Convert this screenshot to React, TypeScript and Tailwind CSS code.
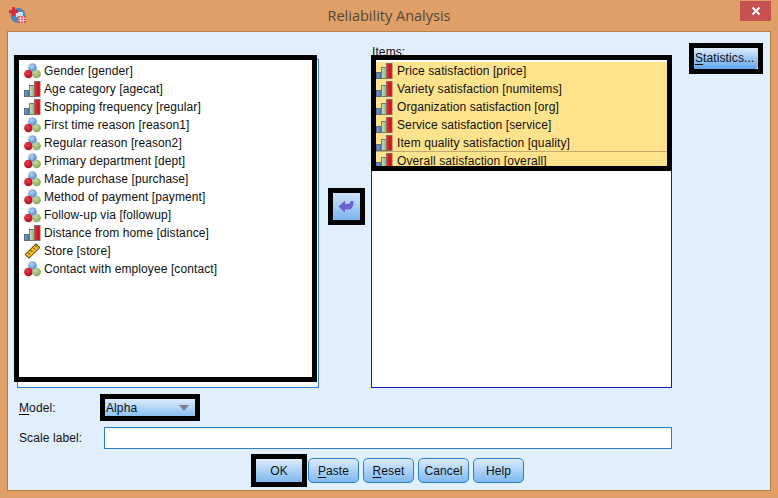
type Kind = "nominal" | "ordinal" | "scale";

const leftVars: { label: string; kind: Kind }[] = [
  { label: "Gender [gender]", kind: "nominal" },
  { label: "Age category [agecat]", kind: "ordinal" },
  { label: "Shopping frequency [regular]", kind: "ordinal" },
  { label: "First time reason [reason1]", kind: "nominal" },
  { label: "Regular reason [reason2]", kind: "nominal" },
  { label: "Primary department [dept]", kind: "nominal" },
  { label: "Made purchase [purchase]", kind: "nominal" },
  { label: "Method of payment [payment]", kind: "nominal" },
  { label: "Follow-up via [followup]", kind: "nominal" },
  { label: "Distance from home [distance]", kind: "ordinal" },
  { label: "Store [store]", kind: "scale" },
  { label: "Contact with employee [contact]", kind: "nominal" },
];

const items = [
  "Price satisfaction [price]",
  "Variety satisfaction [numitems]",
  "Organization satisfaction [org]",
  "Service satisfaction [service]",
  "Item quality satisfaction [quality]",
  "Overall satisfaction [overall]",
];

const IconDefs = () => (
  <svg width="0" height="0" className="absolute">
    <defs>
      <radialGradient id="ballBlue" cx="0.4" cy="0.35" r="0.7">
        <stop offset="0" stopColor="#b4d4f4" />
        <stop offset="1" stopColor="#4f82c4" />
      </radialGradient>
      <radialGradient id="ballRed" cx="0.4" cy="0.35" r="0.7">
        <stop offset="0" stopColor="#ee3a4a" />
        <stop offset="1" stopColor="#a80f22" />
      </radialGradient>
      <radialGradient id="ballGreen" cx="0.4" cy="0.35" r="0.7">
        <stop offset="0" stopColor="#c4dca0" />
        <stop offset="1" stopColor="#7da552" />
      </radialGradient>
      <linearGradient id="barRed" x1="0" x2="1" y1="0" y2="0">
        <stop offset="0" stopColor="#f03030" />
        <stop offset="1" stopColor="#c00810" />
      </linearGradient>
      <linearGradient id="barGreen" x1="0" x2="1" y1="0" y2="0">
        <stop offset="0" stopColor="#cfe0b8" />
        <stop offset="1" stopColor="#8cb070" />
      </linearGradient>
      <linearGradient id="barBlue" x1="0" x2="1" y1="0" y2="0">
        <stop offset="0" stopColor="#7aa4d8" />
        <stop offset="1" stopColor="#3a6cb0" />
      </linearGradient>
    </defs>
  </svg>
);

const VarIcon = ({ kind }: { kind: Kind }) => {
  if (kind === "nominal")
    return (
      <svg width="17" height="16" viewBox="0 0 17 16" className="shrink-0">
        <circle cx="8.5" cy="4.5" r="4.3" fill="url(#ballBlue)" />
        <circle cx="4.4" cy="11" r="4.3" fill="url(#ballRed)" />
        <circle cx="12.6" cy="11" r="4.3" fill="url(#ballGreen)" />
      </svg>
    );
  if (kind === "ordinal")
    return (
      <svg width="17" height="16" viewBox="0 0 17 16" className="shrink-0">
        <rect x="0.5" y="9.5" width="5" height="6" fill="url(#barBlue)" stroke="#5f6b78" />
        <rect x="5.5" y="4.5" width="5" height="11" fill="url(#barGreen)" stroke="#6f7f6a" />
        <rect x="10.5" y="0.5" width="5.5" height="15" fill="url(#barRed)" stroke="#8a6a6a" />
      </svg>
    );
  return (
    <svg width="17" height="16" viewBox="0 0 17 16" className="shrink-0">
      <path d="M1 11.5 12 0.8 16 4.5 5 15.2Z" fill="#f4b41c" stroke="#3a3216" strokeWidth="1" />
      <path d="M4 9.5 5.8 11.3M6.5 7 8.3 8.8M9 4.6 10.8 6.4M11.5 2.4 13.3 4.2" stroke="#3a3216" strokeWidth="1" />
    </svg>
  );
};

const Underlined = ({ first, rest }: { first: string; rest: string }) => (
  <>
    <span className="underline underline-offset-2">{first}</span>
    {rest}
  </>
);

const DialogButton = ({ children }: { children: React.ReactNode }) => (
  <button className="flex h-[25px] w-[51px] items-center justify-center rounded-[5px] border border-[#2a7fd0] bg-gradient-to-b from-[#dcebfb] to-[#7db8f0] text-[12px] tracking-[0.1px] text-[#101010]">
    {children}
  </button>
);

const Frame = ({ className }: { className: string }) => (
  <div className={`pointer-events-none absolute border-[5px] border-black ${className}`} />
);

export default function App() {
  return (
    <div className="flex h-[498px] w-[778px] flex-col overflow-hidden bg-[#df9f66] font-['Liberation_Sans',sans-serif] text-[12px] tracking-[0.1px] text-[#101010]">
      <IconDefs />
      <div className="relative flex h-[31px] shrink-0 items-center justify-center">
        <svg width="18" height="18" viewBox="0 0 18 18" className="absolute left-[9px] top-[6px]">
          <circle cx="9" cy="9.5" r="7.5" fill="#4a86bc" />
          <rect x="7" y="6" width="7" height="5" fill="#cfe0f0" />
          <path d="M3 1h3v3h3v3H6v3H3V7H0V4h3Z" fill="#d8283c" />
          <rect x="9" y="10" width="8" height="7" fill="#e04a5a" />
          <path d="M9 12.3h8M9 14.6h8M11.6 10v7M14.3 10v7" stroke="#fff" strokeWidth="0.7" />
        </svg>
        <span className="font-['Open_Sans',sans-serif] text-[14.5px] tracking-normal text-[#54483c]">Reliability Analysis</span>
        <div className="absolute right-[7px] top-[1px] flex h-[20px] w-[31px] items-center justify-center bg-[#c75050]">
          <svg width="10" height="10" viewBox="0 0 10 10">
            <path d="M1.5 1.5 8.5 8.5M8.5 1.5 1.5 8.5" stroke="#fff" strokeWidth="2" />
          </svg>
        </div>
      </div>

      <div className="mx-[7px] mb-[7px] flex flex-1 flex-col border border-[#b5803f] bg-[#e1eefb] px-[9px]">
        <div className="flex pt-[27px]">
          <div className="relative h-[329px] w-[302px] shrink-0 border border-[#2a7fd0] bg-white pl-[6px] pt-[2px]">
            {leftVars.map((v) => (
              <div key={v.label} className="flex h-[18px] items-center gap-[3px] whitespace-nowrap">
                <VarIcon kind={v.kind} />
                <span>{v.label}</span>
              </div>
            ))}
            <Frame className="-left-[4px] -top-[5px] h-[327px] w-[303px]" />
          </div>

          <div className="flex w-[52px] shrink-0 items-center justify-center pb-[1px]">
            <div className="relative ml-[2px] mt-[-34px] flex h-[27px] w-[27px] items-center justify-center bg-gradient-to-b from-[#cfe3f8] to-[#79b4ee]">
              <svg width="16" height="14" viewBox="0 0 16 14">
                <path d="M0.5 7.5 7 1.5V5h3c1.5 0 2.2-1 2.8-3H15.5c0 5-1.5 8.5-5 8.5H7v3.2Z" fill="#6a63cf" />
              </svg>
              <Frame className="-inset-[5px]" />
            </div>
          </div>

          <div className="relative h-[329px] w-[301px] shrink-0 border border-[#1a1aa8] bg-white pt-[2px]">
            <span className="absolute -top-[17px] left-0">Items:</span>
            {items.map((label, i) => (
              <div
                key={label}
                className={`flex h-[18px] items-center gap-[4px] whitespace-nowrap bg-[#ffe38c] pl-[4px] ${i === 5 ? "-mt-px border-t border-[#c4a868]" : ""}`}
              >
                <VarIcon kind="ordinal" />
                <span>{label}</span>
              </div>
            ))}
            <Frame className="-left-px -top-[5px] h-[116px] w-[301px]" />
          </div>

          <div className="ml-[22px]">
            <div className="relative -mt-[11px] flex h-[21px] w-[64px] items-center rounded-br-[4px] bg-gradient-to-b from-[#dcebfb] to-[#5fa6ec] pb-[1px] pl-[1px]">
              <span className="whitespace-nowrap">
                <Underlined first="S" rest="tatistics..." />
              </span>
              <Frame className="-inset-x-[5px] -inset-y-[5px]" />
            </div>
          </div>
        </div>

        <div className="mt-[11px] flex h-[17px] items-center">
          <span className="w-[88px] pl-[2px]">
            <Underlined first="M" rest="odel:" />
          </span>
          <div className="relative flex h-[17px] w-[90px] items-center justify-between bg-gradient-to-b from-[#dcebfb] to-[#8cc0f2] pl-[1px] pr-[6px]">
            <span>Alpha</span>
            <svg width="10" height="6" viewBox="0 0 10 6">
              <path d="M0 0h10L5 6Z" fill="#77808c" />
            </svg>
            <Frame className="-inset-[5px]" />
          </div>
        </div>

        <div className="mt-[11px] flex items-center">
          <span className="w-[87px] pl-[2px]">Scale label:</span>
          <div className="h-[22px] w-[568px] border border-[#2a7fd0] bg-white" />
        </div>

        <div className="mt-[9px] flex items-center pl-[239px]">
          <div className="relative mr-[6px] flex h-[23px] w-[46px] items-center justify-center bg-gradient-to-b from-[#dcebfb] to-[#7db8f0]">
            OK
            <Frame className="-inset-[5px]" />
          </div>
          <div className="flex gap-[4px]">
            <DialogButton>
              <Underlined first="P" rest="aste" />
            </DialogButton>
            <DialogButton>
              <Underlined first="R" rest="eset" />
            </DialogButton>
            <DialogButton>Cancel</DialogButton>
            <DialogButton>Help</DialogButton>
          </div>
        </div>
      </div>
    </div>
  );
}
